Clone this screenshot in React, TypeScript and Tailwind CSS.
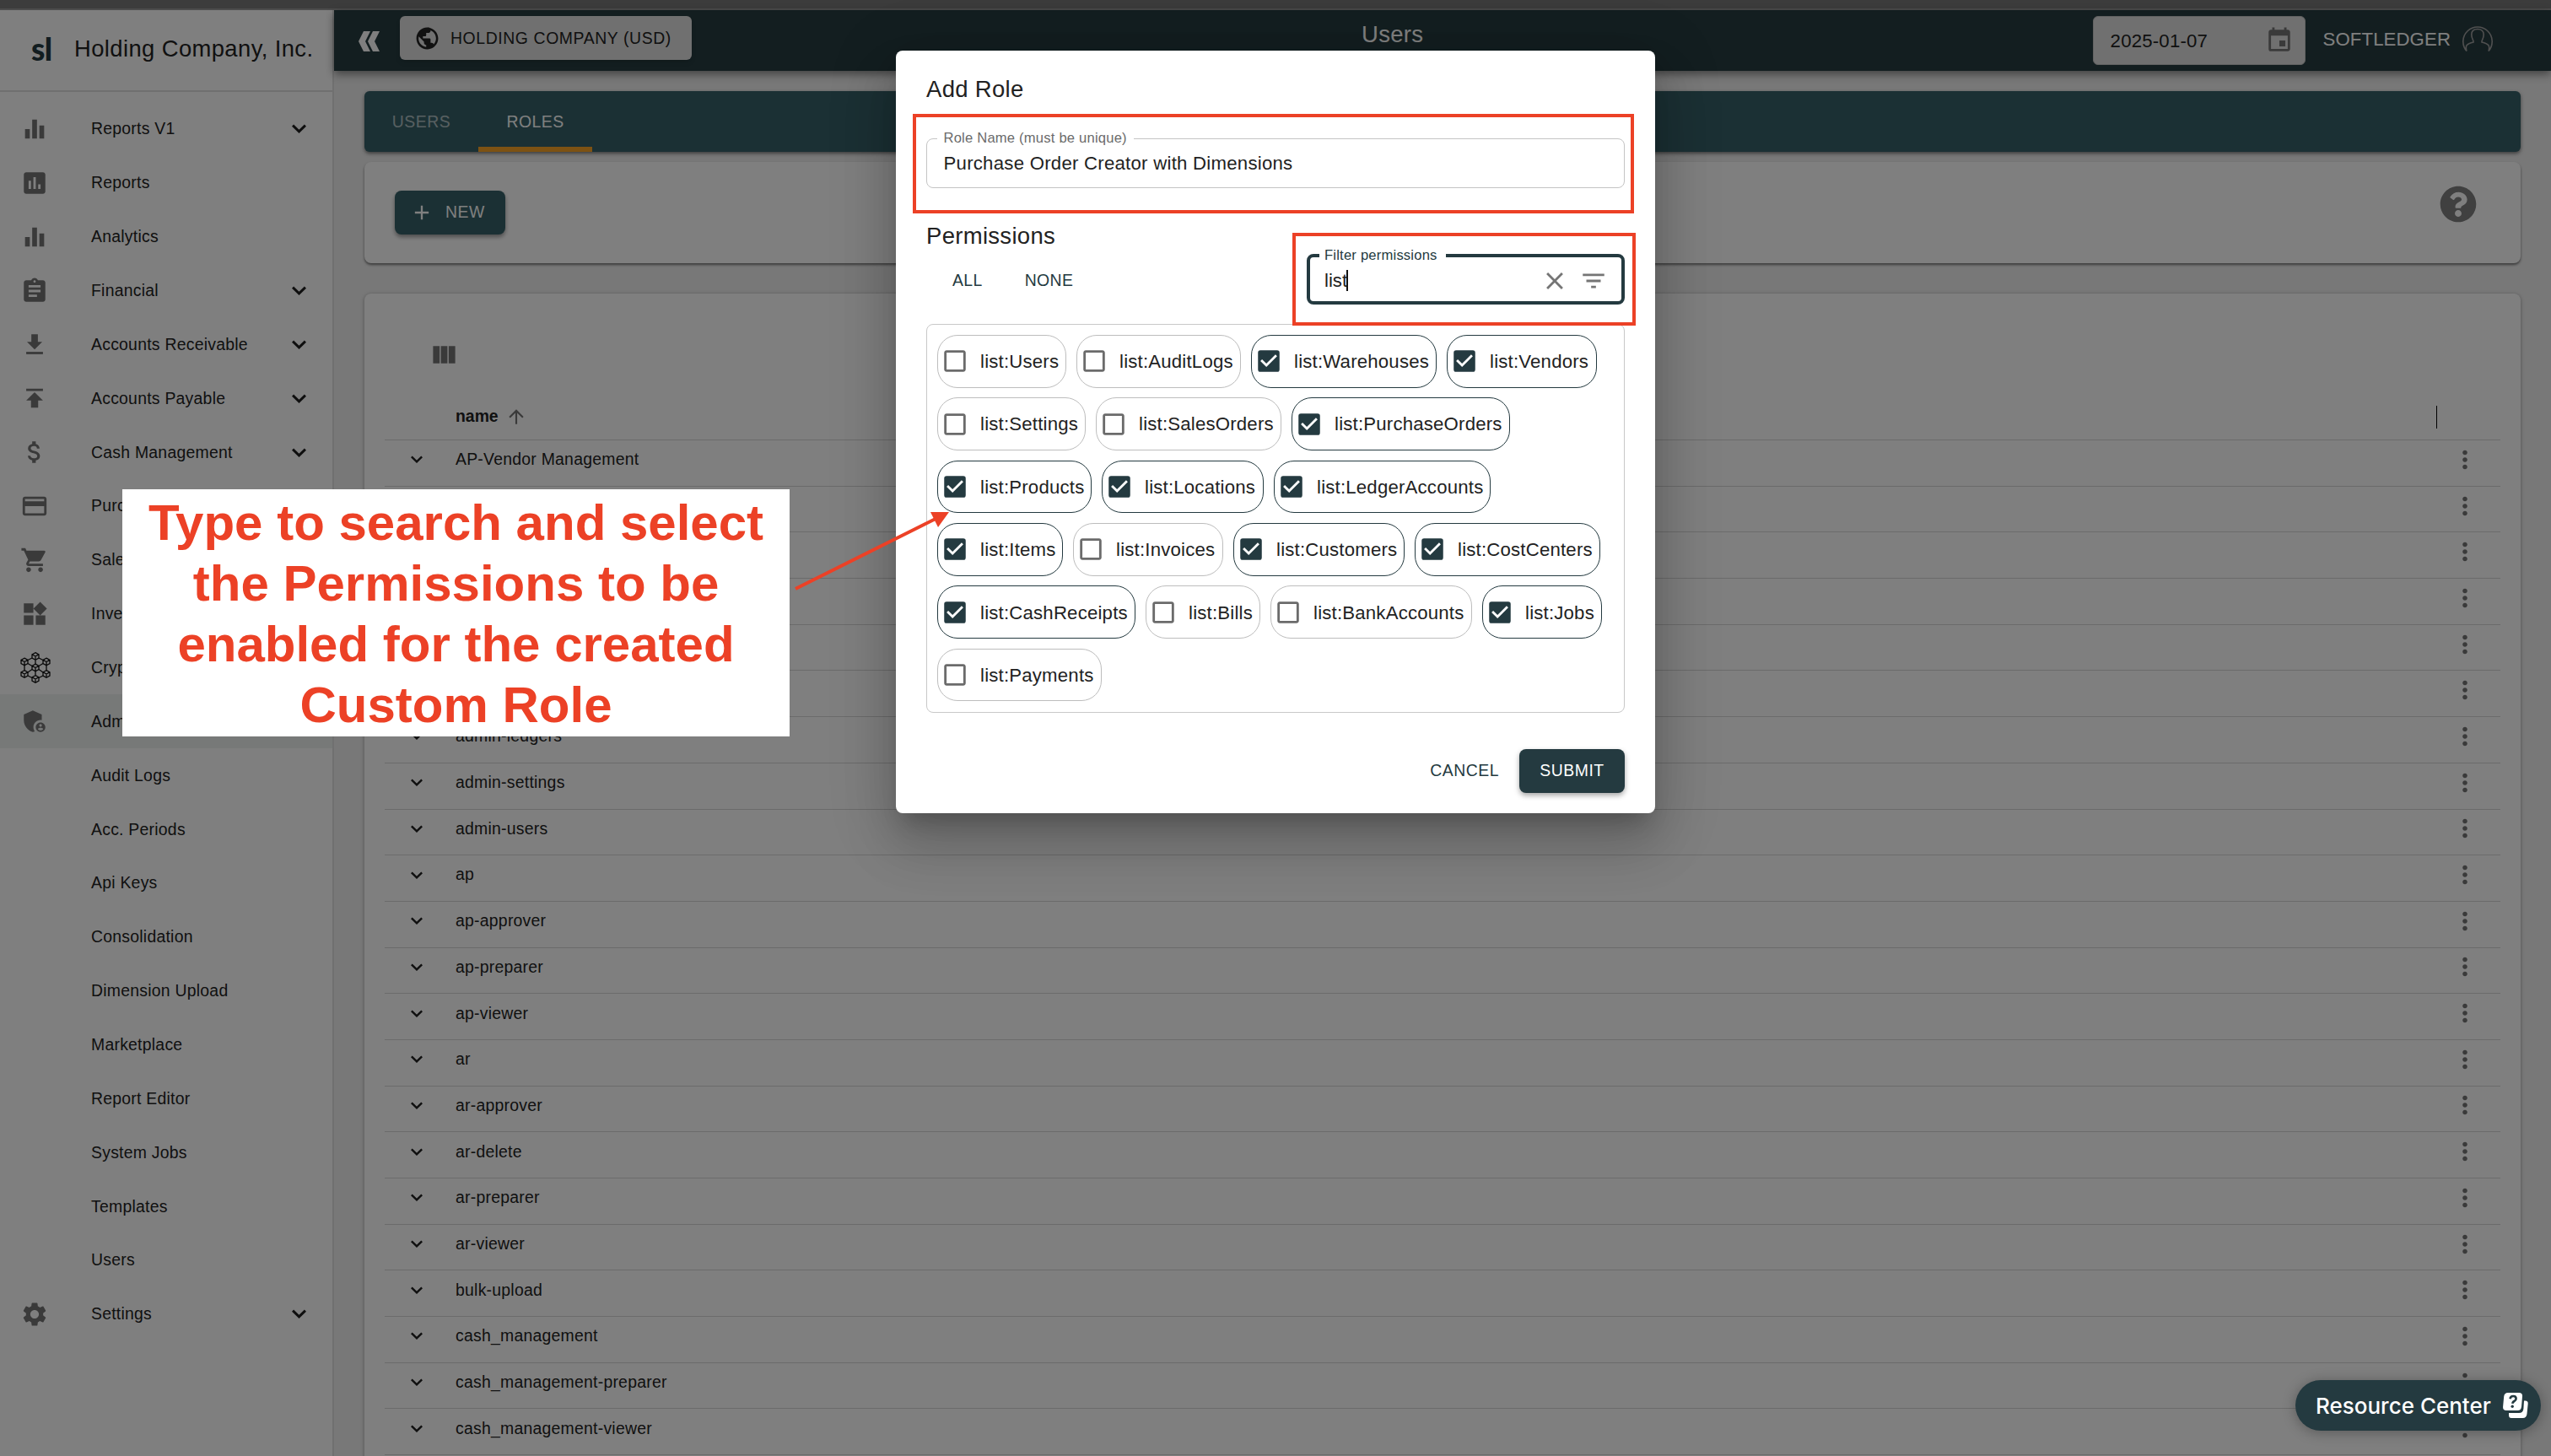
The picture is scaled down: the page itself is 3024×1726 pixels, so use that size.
import type { ReactNode } from 'react';
import { FaQuestionCircle } from 'react-icons/fa';
import {
  MdAdd,
  MdAdminPanelSettings,
  MdArrowUpward,
  MdAssessment,
  MdAssignment,
  MdAttachMoney,
  MdCheckBox,
  MdCheckBoxOutlineBlank,
  MdClose,
  MdEqualizer,
  MdEvent,
  MdFilterList,
  MdMoreVert,
  MdPayment,
  MdPublic,
  MdSettings,
  MdShoppingCart,
  MdViewColumn,
  MdWidgets,
} from 'react-icons/md';

type NavItem = {
  label: string;
  icon?: ReactNode;
  expandable?: boolean;
  active?: boolean;
};

function ReceivableIcon() {
  return (
    <svg viewBox="0 0 24 24" className="h-[34px] w-[34px]" fill="currentColor">
      <path d="M19 10h-4V3H9v7H5l7 7 7-7z" transform="translate(1.1 .9) scale(.91)" />
      <path d="M5 18.4h14v2H5z" />
    </svg>
  );
}

function PayableIcon() {
  return (
    <svg viewBox="0 0 24 24" className="h-[34px] w-[34px]" fill="currentColor">
      <path d="M5 4v2h14V4H5zm0 10h4v6h6v-6h4l-7-7-7 7z" />
    </svg>
  );
}

const CUBES = [
  [18, 5],
  [5, 11.5],
  [31, 11.5],
  [18, 18.5],
  [5, 26],
  [31, 26],
  [18, 32],
];

function CryptoIcon() {
  return (
    <svg viewBox="0 0 36 37" className="h-[37px] w-[36px]" fill="none" stroke="#111" strokeWidth="1.3">
      <path d="M9 9.5 14 7M22 7l5 2.500M5 16v6M31 16v6M9 28l5 2.500M22 30.500l5-2.500M9 13.500l5 3M27 13.500l-5 3M18 9.500v4.500M18 23v4.500M9 24l5-3.500M27 24l-5-3.500" />
      {CUBES.map(([x, y]) => (
        <path
          key={`${x}-${y}`}
          transform={`translate(${x} ${y})`}
          d="M0-4.300 4-2.200V2.200L0 4.300-4 2.200V-2.200ZM-4-2.200 0 0 4-2.200M0 0V4.300"
        />
      ))}
    </svg>
  );
}

function Chevron({ className }: { className: string }) {
  return (
    <svg viewBox="0 0 16 10" className={className} fill="none" stroke="#1e1e1e" strokeWidth="2.8">
      <path d="M1 1.300 8 8.200 15 1.300" />
    </svg>
  );
}

const icon = 'h-[34px] w-[34px]';

const NAV: NavItem[] = [
  { label: 'Reports V1', icon: <MdEqualizer className={icon} />, expandable: true },
  { label: 'Reports', icon: <MdAssessment className={icon} /> },
  { label: 'Analytics', icon: <MdEqualizer className={icon} /> },
  { label: 'Financial', icon: <MdAssignment className={icon} />, expandable: true },
  { label: 'Accounts Receivable', icon: <ReceivableIcon />, expandable: true },
  { label: 'Accounts Payable', icon: <PayableIcon />, expandable: true },
  { label: 'Cash Management', icon: <MdAttachMoney className={icon} />, expandable: true },
  { label: 'Purchasing', icon: <MdPayment className={icon} />, expandable: true },
  { label: 'Sales', icon: <MdShoppingCart className={icon} />, expandable: true },
  { label: 'Inventory', icon: <MdWidgets className={icon} />, expandable: true },
  { label: 'Crypto', icon: <CryptoIcon />, expandable: true },
  { label: 'Admin', icon: <MdAdminPanelSettings className={icon} />, active: true },
  { label: 'Audit Logs' },
  { label: 'Acc. Periods' },
  { label: 'Api Keys' },
  { label: 'Consolidation' },
  { label: 'Dimension Upload' },
  { label: 'Marketplace' },
  { label: 'Report Editor' },
  { label: 'System Jobs' },
  { label: 'Templates' },
  { label: 'Users' },
  { label: 'Settings', icon: <MdSettings className={icon} />, expandable: true },
];

// rows without a name sit behind the callout
const ROLES = [
  'AP-Vendor Management',
  '',
  '',
  '',
  '',
  '',
  'admin-ledgers',
  'admin-settings',
  'admin-users',
  'ap',
  'ap-approver',
  'ap-preparer',
  'ap-viewer',
  'ar',
  'ar-approver',
  'ar-delete',
  'ar-preparer',
  'ar-viewer',
  'bulk-upload',
  'cash_management',
  'cash_management-preparer',
  'cash_management-viewer',
];

const PERMISSIONS = [
  { name: 'Users', width: 'w-[153px]' },
  { name: 'AuditLogs', width: 'w-[195px]' },
  { name: 'Warehouses', width: 'w-[220px]', checked: true },
  { name: 'Vendors', width: 'w-[178px]', checked: true },
  { name: 'Settings', width: 'w-[176px]' },
  { name: 'SalesOrders', width: 'w-[220px]' },
  { name: 'PurchaseOrders', width: 'w-[259px]', checked: true },
  { name: 'Products', width: 'w-[183px]', checked: true },
  { name: 'Locations', width: 'w-[192px]', checked: true },
  { name: 'LedgerAccounts', width: 'w-[257px]', checked: true },
  { name: 'Items', width: 'w-[149px]', checked: true },
  { name: 'Invoices', width: 'w-[178px]' },
  { name: 'Customers', width: 'w-[203px]', checked: true },
  { name: 'CostCenters', width: 'w-[220px]', checked: true },
  { name: 'CashReceipts', width: 'w-[235px]', checked: true },
  { name: 'Bills', width: 'w-[136px]' },
  { name: 'BankAccounts', width: 'w-[239px]' },
  { name: 'Jobs', width: 'w-[142px]', checked: true },
  { name: 'Payments', width: 'w-[195px]' },
];

function Sidebar() {
  return (
    <aside className="flex w-[396px] shrink-0 flex-col border-r-2 border-[#e0e0e0] bg-white">
      <div className="flex h-[97px] shrink-0 items-center border-b-2 border-[#e0e0e0] pl-[37px]">
        <span className="w-[51px] pb-1 font-['Lato'] text-[37px] leading-none font-black tracking-[-0.5px] text-[#243a40]">
          sl
        </span>
        <span className="pb-[3px] text-[27.4px] tracking-[0.4px] whitespace-nowrap">Holding Company, Inc.</span>
      </div>
      <nav className="flex flex-col pt-[12px]">
        {NAV.map((item) => (
          <div
            key={item.label}
            className={`flex h-[63.86px] items-center pl-[24px] ${item.active ? 'bg-[#eef2f1]' : ''}`}
          >
            <span className="flex w-[84px] text-[#757575]">{item.icon}</span>
            <span className="flex-1 text-[19.4px] tracking-[0.25px]">{item.label}</span>
            {item.expandable && <Chevron className="mr-[31px] h-[11px] w-[17px]" />}
          </div>
        ))}
      </nav>
    </aside>
  );
}

function Header() {
  return (
    <header className="z-10 flex h-[72px] shrink-0 items-start bg-[#263c40] shadow-[0_4px_10px_rgba(0,0,0,0.45)]">
      <svg viewBox="0 0 26 24" className="mt-[25px] ml-[29px] h-[24px] w-[26px]" fill="#fff">
        <path d="M0 12 6 0H14L8 12l6 12H6ZM11 12 17 0h8L19 12l6 12H17Z" />
      </svg>
      <div className="mt-[7px] ml-[23px] flex h-[52px] w-[346px] items-center rounded-md bg-[#e0e0e0] pl-[17px] shadow-md">
        <MdPublic className="h-[31px] w-[31px]" />
        <span className="ml-[12px] pt-[1px] text-[19.4px] tracking-[0.6px]">HOLDING COMPANY (USD)</span>
      </div>
      <div className="mt-[9px] flex-1 pl-[794px] text-[27.5px] leading-[40px] tracking-[0.3px] text-white">Users</div>
      <div className="mt-[7px] flex h-[58px] w-[252px] items-center justify-between rounded-md border border-[#c4c4c4] bg-[#e0e0e0] pr-[13px] pl-[20px]">
        <span className="pt-[1px] text-[22.2px] tracking-[0.2px]">2025-01-07</span>
        <MdEvent className="h-[34px] w-[34px] text-[#757575]" />
      </div>
      <span className="mt-[19px] ml-[21px] text-[22.2px] leading-[32px] tracking-[0.1px] text-white">SOFTLEDGER</span>
      <svg viewBox="0 0 36 32" className="mt-[18px] mr-[69px] ml-[14px] h-[32px] w-[36px]" fill="none" stroke="#a0a0a0" strokeWidth="1.600">
        <path d="M5 30.500A17.200 17.200 0 1 1 31 30.500C33 24 31 22 23 20 22.500 17.500 25.200 16 25.200 11 25.200 6.500 22 4.500 18 4.500S10.800 6.500 10.800 11C10.800 16 13.500 17.500 13 20 5 22 3 24 5 30.500Z" />
      </svg>
    </header>
  );
}

function RolesTable() {
  return (
    <section className="mt-[36px] flex h-[1400px] shrink-0 flex-col rounded-lg bg-white px-[24px] shadow-[0_1px_4px_rgba(0,0,0,0.35)]">
      <div className="flex h-[116px] items-end pb-[26px] pl-[53px]">
        <MdViewColumn className="h-[35px] w-[35px] text-[#757575]" />
      </div>
      <div className="flex h-[58px] items-center border-b border-[#d6d6d6] pt-[3px] pl-[84px]">
        <span className="text-[19.4px] font-bold">name</span>
        <MdArrowUpward className="ml-[8px] h-[26px] w-[26px] text-[#757575]" />
        <span className="mr-[75px] ml-auto h-[27px] w-px bg-black" />
      </div>
      {ROLES.map((role, i) => (
        <div key={i} className="flex h-[54.7px] shrink-0 items-center border-b border-[#d6d6d6] pb-[8px] pl-[31px]">
          <Chevron className="h-[9px] w-[14px]" />
          <span className="ml-[39px] flex-1 text-[19.4px] tracking-[0.25px]">{role}</span>
          <MdMoreVert className="mr-[25px] h-[34px] w-[34px] text-[#757575]" />
        </div>
      ))}
    </section>
  );
}

function PermissionChip({ name, width, checked }: { name: string; width: string; checked?: boolean }) {
  return (
    <div
      className={`flex h-[62.500px] shrink-0 items-center rounded-[24px] border-[1.5px] pl-[3px] ${width} ${
        checked ? 'border-[#243a40]' : 'border-[#bdbdbd]'
      }`}
    >
      {checked ? (
        <MdCheckBox className="h-[34px] w-[34px] shrink-0 text-[#243a40]" />
      ) : (
        <MdCheckBoxOutlineBlank className="h-[34px] w-[34px] shrink-0 text-[#6b6b6b]" />
      )}
      <span className="ml-[13px] pt-[1px] text-[22.2px] tracking-[0.2px] whitespace-nowrap">list:{name}</span>
    </div>
  );
}

function AddRoleDialog() {
  return (
    <div className="absolute top-[60px] left-[1062px] flex h-[904px] w-[900px] flex-col rounded-lg bg-white px-[36px] text-[#222] shadow-[0_18px_24px_-10px_rgba(0,0,0,0.2),0_38px_61px_5px_rgba(0,0,0,0.14),0_14px_74px_13px_rgba(0,0,0,0.12)]">
      <h2 className="mt-[26px] text-[27.5px] leading-[40px] tracking-[0.3px]">Add Role</h2>

      <fieldset className="mt-[27px] h-[70px] rounded-lg border-[1.5px] border-[#c4c4c4] pl-[19.5px]">
        <legend className="-ml-[8px] px-[8px] text-[16.6px] leading-[22px] tracking-[0.2px] text-[#6b6b6b]">
          Role Name (must be unique)
        </legend>
        <div className="mt-[4px] text-[22.2px] leading-[30px] tracking-[0.25px]">Purchase Order Creator with Dimensions</div>
      </fieldset>

      <h3 className="mt-[37px] text-[27.5px] leading-[40px] tracking-[0.3px]">Permissions</h3>

      <div className="flex h-[62px] text-[19.4px] tracking-[0.4px] text-[#243a40]">
        <span className="mt-[18px] ml-[31px] leading-[28px]">ALL</span>
        <span className="mt-[18px] ml-[50px] leading-[28px]">NONE</span>
        <fieldset className="mt-[-9px] ml-auto h-[70px] w-[377px] rounded-lg border-4 border-[#243a40] pl-[17px]">
          <legend className="-ml-[6px] px-[6px] pr-[10px] text-[16.6px] leading-[24px] tracking-[0.2px]">
            Filter permissions
          </legend>
          <div className="flex h-[35px] items-center pr-[16px] text-[22.2px] tracking-normal text-[#222]">
            <span>list</span>
            <span className="-ml-px h-[25px] w-[2px] bg-[#111]" />
            <MdClose className="mr-[12px] ml-auto h-[34px] w-[34px] text-[#757575]" />
            <MdFilterList className="h-[34px] w-[34px] text-[#757575]" />
          </div>
        </fieldset>
      </div>

      <div className="mt-[22px] flex h-[461px] flex-wrap content-start gap-x-[12px] gap-y-[11.860px] rounded-lg border-[1.5px] border-[#c8c8c8] pt-[12px] pr-[12px] pl-[12px]">
        {PERMISSIONS.map((p) => (
          <PermissionChip key={p.name} {...p} />
        ))}
      </div>

      <div className="mt-[43px] flex items-center justify-end text-[19.4px] tracking-[0.5px]">
        <span className="mr-[24px] text-[#243a40]">CANCEL</span>
        <button className="h-[52px] w-[125px] rounded-lg bg-[#243a40] tracking-[0.5px] text-white shadow-[0_3px_6px_rgba(0,0,0,0.35)]">
          SUBMIT
        </button>
      </div>
    </div>
  );
}

function Annotations() {
  return (
    <>
      <div className="absolute top-[135px] left-[1082px] h-[118px] w-[855px] border-4 border-[#ec4126]" />
      <div className="absolute top-[276px] left-[1532px] h-[110px] w-[407px] border-4 border-[#ec4126]" />
      <svg viewBox="0 0 190 100" className="absolute top-[600px] left-[940px] h-[100px] w-[190px]">
        <path d="M3 98 169 15" stroke="#ec4126" strokeWidth="4" />
        <path d="M185 7 163 7 172 25Z" fill="#ec4126" />
      </svg>
      <div className="absolute top-[580px] left-[145px] flex h-[293px] w-[791px] flex-col items-center bg-white pt-[4px] text-[60px] leading-[72px] font-bold whitespace-nowrap text-[#ec4126]">
        <span>Type to search and select</span>
        <span>the Permissions to be</span>
        <span>enabled for the created</span>
        <span>Custom Role</span>
      </div>
    </>
  );
}

function ResourceCenter() {
  return (
    <div className="absolute top-[1636px] left-[2721px] flex h-[60px] w-[291px] items-center rounded-full bg-[#243a40] pl-[24px] font-['Inter'] text-white shadow-[0_2px_16px_rgba(0,0,0,0.3)]">
      <span className="w-[222px] pt-[1px] text-[26px] font-medium whitespace-nowrap">Resource Center</span>
      <svg viewBox="0 0 30 30" className="h-[30px] w-[30px]">
        <path d="M25 9.500h1.500Q30 9.500 29.700 13L28.500 25Q28 30 23.500 30H10Q7 30 7 26.500V24H19Q24 24 24.400 19Z" fill="#fff" />
        <path d="M6 0H19Q23.500 0 23 4.500L22 16.500Q21.500 21 17.500 21H4Q-.3 21 .1 16.500L1.200 4.500Q1.700 0 6 0Z" fill="#fff" />
        <path d="M8.500 7.200Q9 4 12.300 4T15.600 7Q15.600 9 13.500 10T11.600 12.800" fill="none" stroke="#243a40" strokeWidth="2.600" />
        <circle cx="11.200" cy="16.300" r="1.700" fill="#243a40" />
      </svg>
    </div>
  );
}

export default function App() {
  return (
    <div className="relative flex h-[1726px] w-[3024px] flex-col overflow-hidden bg-[#f0f0f0] font-['Liberation_Sans',sans-serif] text-[#222]">
      <div className="h-[12px] shrink-0 border-b-2 border-[#999] bg-[#787878]" />
      <div className="flex min-h-0 flex-1">
        <Sidebar />
        <div className="flex min-w-0 flex-1 flex-col">
          <Header />
          <main className="flex min-h-0 flex-1 flex-col px-[36px] pt-[24px]">
            <div className="flex h-[72px] shrink-0 rounded-md bg-[#366068] text-[19.4px] tracking-[0.5px] text-white shadow-[0_2px_4px_rgba(0,0,0,0.5)]">
              <div className="flex w-[135px] items-center justify-center pt-[1px] opacity-60">USERS</div>
              <div className="flex w-[135px] items-center justify-center border-b-[6px] border-[#fba526] pt-[7px]">ROLES</div>
            </div>
            <div className="mt-[12px] flex h-[120px] shrink-0 items-start justify-between rounded-lg bg-white pt-[24px] pr-[52px] pl-[36px] shadow-[0_2px_3px_rgba(0,0,0,0.5)]">
              <button className="mt-[10px] flex h-[52px] w-[131px] items-center rounded-lg bg-[#366068] pl-[18px] text-[19.4px] tracking-[0.5px] text-white shadow-[0_3px_5px_rgba(0,0,0,0.4)]">
                <MdAdd className="mr-[14px] h-[28px] w-[28px]" />
                NEW
              </button>
              <FaQuestionCircle className="mt-[4px] h-[44px] w-[44px] text-[#808080]" />
            </div>
            <RolesTable />
          </main>
        </div>
      </div>

      <div className="absolute inset-0 z-20 bg-black/50" />
      <div className="absolute inset-0 z-30">
        <AddRoleDialog />
        <Annotations />
        <ResourceCenter />
      </div>
    </div>
  );
}
